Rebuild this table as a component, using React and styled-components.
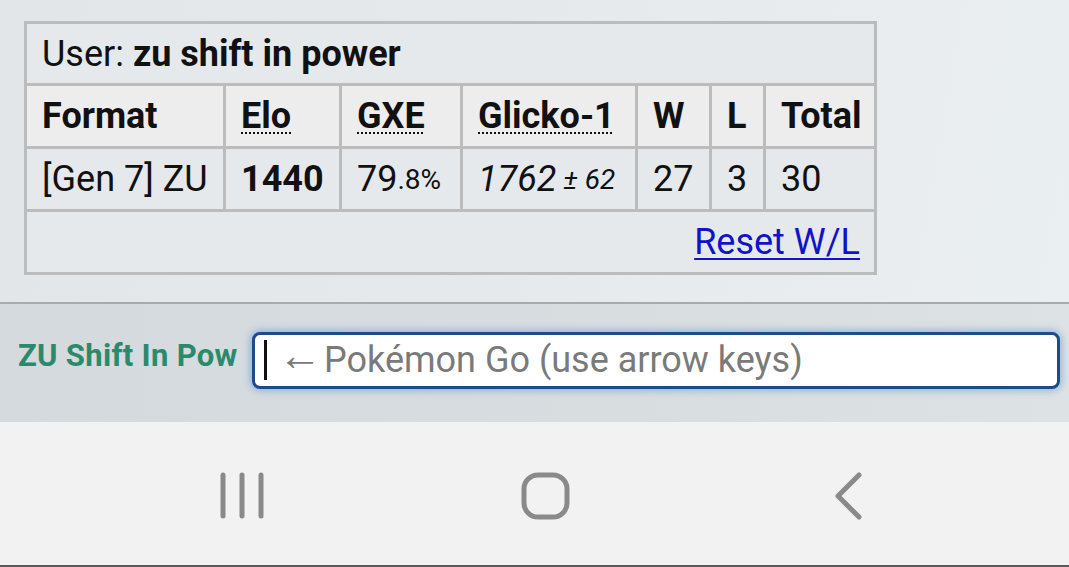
import React from "react";
import styled, { createGlobalStyle } from "styled-components";

const Global = createGlobalStyle`
  html, body { margin: 0; padding: 0; }
  body { font-family: Roboto, "Liberation Sans", sans-serif; background: #e4e8eb; overflow: hidden; }
`;

const Screen = styled.div`
  width: 1069px;
  height: 567px;
  display: flex;
  flex-direction: column;
`;

const Main = styled.div`
  height: 302px;
  box-sizing: border-box;
  padding: 21px 0 0 24px;
  background: linear-gradient(100deg, #e2e6e9 0%, #e6eaed 55%, #eaeff1 100%);
`;

const Table = styled.div`
  display: inline-grid;
  grid-template-columns: 196px 113px 118px 172px 71px 51px 108px;
  grid-template-rows: 59px 60px 60px 60px;
  gap: 3px;
  padding: 3px;
  background: #bcbcbc;
`;

const Cell = styled.div`
  display: flex;
  align-items: center;
  padding: 0 12px 0 15px;
  font-size: 36px;
  color: #111;
  white-space: nowrap;
  background: ${(p) => (p.$head ? "#ededed" : "#e5e9ec")};
  font-weight: ${(p) => (p.$bold ? 700 : 400)};
  font-style: ${(p) => (p.$italic ? "italic" : "normal")};
  grid-column: ${(p) => (p.$wide ? "1 / -1" : "auto")};
  justify-content: ${(p) => (p.$end ? "flex-end" : "flex-start")};
  padding-right: ${(p) => (p.$end ? "14px" : "12px")};
`;

const Abbr = styled.span`
  text-decoration: underline dotted;
  text-decoration-thickness: 2px;
  text-underline-offset: 4px;
`;

const Small = styled.span`
  font-size: 28px;
`;

const Link = styled.a`
  color: #1212c9;
  text-decoration: underline;
  text-decoration-thickness: 2px;
  text-underline-offset: 4px;
  cursor: pointer;
`;

const ChatBar = styled.div`
  height: 120px;
  box-sizing: border-box;
  border-top: 2px solid #a8abad;
  background: linear-gradient(90deg, #d5dade 0%, #d8dde0 60%, #dde2e4 100%);
  display: flex;
  align-items: center;
  padding: 0 9px 6px 18px;
`;

const Name = styled.div`
  width: 221px;
  overflow: hidden;
  white-space: nowrap;
  font-size: 31px;
  letter-spacing: 0.3px;
  font-weight: 700;
  color: #2b8a6c;
  margin-bottom: 9px;
`;

const TextBox = styled.div`
  margin-left: 13px;
  flex: 1;
  height: 57px;
  box-sizing: border-box;
  background: #fff;
  border: 3px solid #1d4c86;
  border-radius: 8px;
  box-shadow: 0 0 7px 2px rgba(90, 150, 215, 0.55);
  display: flex;
  align-items: center;
  padding-left: 9px;
  font-size: 36px;
  color: #7a7a7a;
  white-space: nowrap;
`;

const Caret = styled.span`
  width: 3px;
  height: 40px;
  background: #111;
  margin-right: 11px;
`;

const Arrow = styled.span`
  font-size: 44px;
  line-height: 1;
  padding-bottom: 10px;
  margin-right: 2px;
`;

const NavBar = styled.div`
  flex: 1;
  background: #f2f2f2;
  border-bottom: 2px solid #5a5a5a;
  display: grid;
  grid-template-columns: repeat(3, 303px);
  padding-left: 90px;
  align-items: center;
`;

const NavButton = styled.div`
  display: flex;
  justify-content: center;
  align-items: center;
  padding-top: 4px;
`;

const stroke = { stroke: "#8a8a8a", strokeWidth: 5, strokeLinecap: "round", fill: "none" };

export default function App() {
  return (
    <>
      <Global />
      <Screen>
        <Main>
          <Table>
            <Cell $wide>
              User:&nbsp;<b>zu shift in power</b>
            </Cell>
            <Cell $head $bold>Format</Cell>
            <Cell $head $bold><Abbr>Elo</Abbr></Cell>
            <Cell $head $bold><Abbr>GXE</Abbr></Cell>
            <Cell $head $bold><Abbr>Glicko-1</Abbr></Cell>
            <Cell $head $bold>W</Cell>
            <Cell $head $bold>L</Cell>
            <Cell $head $bold>Total</Cell>
            <Cell>[Gen 7] ZU</Cell>
            <Cell $bold>1440</Cell>
            <Cell>
              79<Small>.8%</Small>
            </Cell>
            <Cell $italic>
              1762<Small>&nbsp;± 62</Small>
            </Cell>
            <Cell>27</Cell>
            <Cell>3</Cell>
            <Cell>30</Cell>
            <Cell $wide $end>
              <Link>Reset W/L</Link>
            </Cell>
          </Table>
        </Main>
        <ChatBar>
          <Name>ZU Shift In Pow</Name>
          <TextBox>
            <Caret />
            <Arrow>←</Arrow>Pokémon Go (use arrow keys)
          </TextBox>
        </ChatBar>
        <NavBar>
          <NavButton>
            <svg width="60" height="60" viewBox="0 0 60 60">
              <line x1="11" y1="9" x2="11" y2="50" {...stroke} />
              <line x1="30" y1="9" x2="30" y2="50" {...stroke} />
              <line x1="49" y1="9" x2="49" y2="50" {...stroke} />
            </svg>
          </NavButton>
          <NavButton>
            <svg width="60" height="60" viewBox="0 0 60 60">
              <rect x="9" y="9" width="43" height="42" rx="14" {...stroke} />
            </svg>
          </NavButton>
          <NavButton>
            <svg width="60" height="60" viewBox="0 0 60 60">
              <polyline points="41,9 20,30 41,51" {...stroke} strokeLinejoin="round" />
            </svg>
          </NavButton>
        </NavBar>
      </Screen>
    </>
  );
}
